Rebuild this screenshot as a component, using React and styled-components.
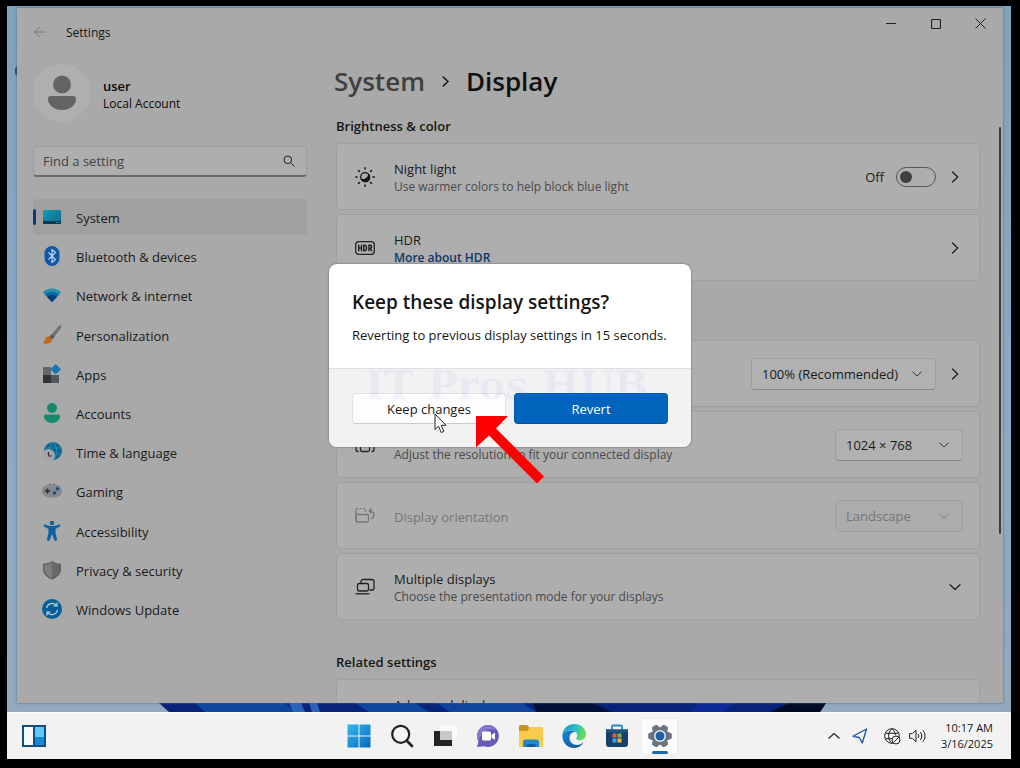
import React, { useState } from 'react';
import styled, { createGlobalStyle } from 'styled-components';

const GlobalStyle = createGlobalStyle`
  * {
    box-sizing: border-box;
  }
  body {
    margin: 0;
    background: #000;
    color: #161616;
    font-family: 'Open Sans', 'Noto Sans', sans-serif;
    font-size: 13px;
    line-height: 18px;
  }
  button, input, select {
    font: inherit;
    color: inherit;
    margin: 0;
  }
  svg {
    display: block;
    flex: none;
  }
  h1, h2, p, ul {
    margin: 0;
    padding: 0;
  }
`;

const Screen = styled.div`
  display: flex;
  flex-direction: column;
  height: 100vh;
  padding: 6px 9px 9px 7px;
`;

const Desktop = styled.div`
  position: relative;
  flex: 1;
  min-height: 0;
  display: flex;
  flex-direction: column;
  padding-top: 2px;
  background: linear-gradient(#7ea3be, #8ba8c8 60%, #93a9bd);
`;

const DesktopIcon = styled.span`
  position: absolute;
  left: 8px;
  top: 60px;
  width: 12px;
  height: 10px;
  border-radius: 4px;
  background: #2c4a60;
`;

const Window = styled.div`
  position: relative;
  flex: 1;
  min-height: 0;
  display: flex;
  flex-direction: column;
  margin: 0 8px 0 10px;
  overflow: hidden;
  background: #a9a9a9;
  box-shadow: 0 0 2px #4d6678;
`;

const TitleBar = styled.header`
  display: flex;
  align-items: center;
  height: 48px;
  flex: none;
  padding-left: 16px;
`;

const BackButton = styled.button`
  display: flex;
  padding: 0;
  border: 0;
  background: none;
  color: #7a7a7a;
`;

const AppName = styled.span`
  flex: 1;
  margin-left: 19px;
  padding-top: 2px;
  font-size: 12px;
`;

const CaptionButton = styled.button`
  align-self: flex-start;
  display: grid;
  place-items: center;
  width: 45px;
  height: 31px;
  padding: 0;
  border: 0;
  background: none;
`;

const WindowBody = styled.div`
  flex: 1;
  min-height: 0;
  display: flex;
`;

const Sidebar = styled.aside`
  width: 290px;
  flex: none;
  padding: 7px 0 0 16px;
`;

const Profile = styled.div`
  display: flex;
  align-items: center;
  gap: 12px;
  height: 59px;
`;

const ProfileText = styled.div`
  padding-top: 3px;
`;

const Avatar = styled.span`
  display: grid;
  place-items: center;
  width: 58px;
  height: 58px;
  border-radius: 50%;
  background: #afafaf;
`;

const UserName = styled.p`
  font-weight: 600;
  color: #0b0b0b;
  font-size: 13px;
`;

const UserKind = styled.p`
  font-size: 12px;
  line-height: 17px;
  color: #0b0b0b;
`;

const Search = styled.label`
  display: flex;
  align-items: center;
  height: 31px;
  margin-top: 24px;
  padding: 0 11px 0 9px;
  border: 1px solid #9e9e9e;
  border-bottom: 2px solid #6a6a6a;
  border-radius: 4px;
  background: #aeaeae;
`;

const SearchInput = styled.input`
  flex: 1;
  min-width: 0;
  padding: 0;
  border: 0;
  outline: 0;
  background: none;
  &::placeholder {
    color: #444;
    opacity: 1;
  }
`;

const NavList = styled.ul`
  display: flex;
  flex-direction: column;
  justify-content: space-between;
  height: 428px;
  margin-top: 22px;
  list-style: none;
`;

const NavLink = styled.a`
  display: flex;
  align-items: center;
  gap: 13px;
  height: 36px;
  border-radius: 4px;
  color: #1a1a1a;
  text-decoration: none;
  background: ${({ $active }) => ($active ? '#a0a0a0' : 'transparent')};
  &::before {
    content: '';
    width: 3px;
    height: 16px;
    margin-right: -7px;
    border-radius: 2px;
    background: ${({ $active }) => ($active ? '#0c3c73' : 'transparent')};
  }
`;

const NavLabel = styled.span`
  padding: 2px 0 0 1px;
`;

const Main = styled.main`
  flex: 1;
  min-width: 0;
  padding-left: 29px;
  display: flex;
  flex-direction: column;
`;

const Breadcrumb = styled.h1`
  display: flex;
  align-items: center;
  gap: 15px;
  height: 50px;
  margin-left: -2px;
  font-size: 26px;
  line-height: 36px;
  font-weight: 600;
  color: #0f0f0f;
`;

const Crumb = styled.a`
  color: #3f3f3f;
  text-decoration: none;
`;

const Scroller = styled.div`
  flex: 1;
  min-height: 0;
  display: flex;
  justify-content: space-between;
  margin-top: 10px;
`;

const Sections = styled.div`
  flex: 1;
  display: flex;
  flex-direction: column;
  gap: 32px;
`;

const ScrollThumb = styled.div`
  width: 2px;
  height: 407px;
  margin: 11px 2px 0 19px;
  border-radius: 1px;
  background: #3c3c3c;
`;

const Section = styled.section`
  display: flex;
  flex-direction: column;
  gap: 4px;
`;

const SectionTitle = styled.h2`
  margin-bottom: 3px;
  font-size: 13px;
  line-height: 20px;
  font-weight: 600;
`;

const Card = styled.div`
  display: flex;
  align-items: center;
  gap: 11px;
  height: 67px;
  padding: 0 16px 0 18px;
  border: 1px solid #a0a0a0;
  border-radius: 4px;
  background: #aeaeae;
  color: ${({ $disabled }) => ($disabled ? '#757575' : '#1a1a1a')};
`;

const CardText = styled.div`
  flex: 1;
  margin-left: 8px;
  padding-top: 2px;
`;

const Caption = styled.p`
  font-size: 12px;
  line-height: 17px;
  color: #4a4a4a;
`;

const MoreLink = styled.a`
  display: block;
  font-size: 12px;
  line-height: 17px;
  font-weight: 600;
  color: #0d3868;
  text-decoration: none;
`;

const ToggleLabel = styled.label`
  display: flex;
  align-items: center;
  gap: 12px;
`;

const Toggle = styled.input`
  appearance: none;
  display: flex;
  align-items: center;
  width: 40px;
  height: 20px;
  padding: 0 3px;
  border: 1px solid #555;
  border-radius: 10px;
  justify-content: ${({ checked }) => (checked ? 'flex-end' : 'flex-start')};
  &::before {
    content: '';
    width: 12px;
    height: 12px;
    border-radius: 50%;
    background: #404040;
  }
`;

const IconButton = styled.button`
  display: grid;
  place-items: center;
  width: 16px;
  height: 20px;
  padding: 0;
  border: 0;
  background: none;
`;

const SelectBox = styled.span`
  display: grid;
  align-items: center;
  width: ${({ $wide }) => ($wide ? '185px' : '128px')};
  > * {
    grid-area: 1 / 1;
  }
  > svg {
    justify-self: end;
    margin-right: 14px;
    pointer-events: none;
  }
`;

const Select = styled.select`
  appearance: none;
  width: 100%;
  height: 32px;
  padding: 0 10px;
  border: 1px solid #9f9f9f;
  border-bottom-color: ${({ disabled }) => (disabled ? '#9f9f9f' : '#888')};
  border-radius: 4px;
  background: ${({ disabled }) => (disabled ? '#acacac' : '#b1b1b1')};
  color: inherit;
  opacity: 1;
`;

const Overlay = styled.div`
  position: absolute;
  inset: 0;
  display: grid;
  place-items: center;
`;

const Dialog = styled.div`
  position: relative;
  width: 362px;
  border-radius: 8px;
  background: #fff;
  box-shadow: 0 0 2px #555;
`;

const DialogBody = styled.div`
  padding: 24px 23px 0;
  height: 104px;
`;

const DialogTitle = styled.h2`
  font-size: 19px;
  line-height: 28px;
  font-weight: 600;
`;

const DialogText = styled.p`
  margin-top: 10px;
`;

const DialogActions = styled.div`
  position: relative;
  display: grid;
  grid-template-columns: 1fr 1fr;
  gap: 8px;
  padding: 24px 23px 23px;
  border-top: 1px solid #dfdfdf;
  border-radius: 0 0 8px 8px;
  background: #f2f2f2;
`;

const DialogButton = styled.button`
  height: 31px;
  padding: 0;
  border: 1px solid ${({ $primary }) => ($primary ? '#005fb8' : '#e0e0e0')};
  border-bottom-color: ${({ $primary }) => ($primary ? '#0a4f93' : '#cacaca')};
  border-radius: 4px;
  background: ${({ $primary }) => ($primary ? '#0064bd' : '#fdfdfd')};
  color: ${({ $primary }) => ($primary ? '#fff' : '#1a1a1a')};
`;

const Watermark = styled.span`
  position: absolute;
  left: 36px;
  top: -7px;
  font: bold 40px/46px 'DejaVu Serif', serif;
  white-space: nowrap;
  color: rgba(90, 90, 240, 0.07);
  pointer-events: none;
`;

const Pointer = styled.svg`
  position: absolute;
  left: 105px;
  top: 149px;
`;

const RedArrow = styled.svg`
  position: absolute;
  left: 146px;
  top: 151px;
`;

const Taskbar = styled.footer`
  display: grid;
  grid-template-columns: 1fr auto 1fr;
  align-items: center;
  height: 47px;
  flex: none;
  padding: 0 14px;
  border-top: 1px solid #fbfbfb;
  background: #f2f2f2;
`;

const TaskGroup = styled.div`
  display: flex;
  gap: 6px;
`;

const TaskButton = styled.button`
  position: relative;
  display: grid;
  place-items: center;
  justify-self: start;
  width: ${({ $plain }) => ($plain ? '26px' : '37px')};
  height: 37px;
  padding: 0;
  border: 1px solid ${({ $active }) => ($active ? '#ebebeb' : 'transparent')};
  border-radius: 4px;
  background: ${({ $active }) => ($active ? '#fbfbfb' : 'none')};
  &::after {
    content: '';
    display: ${({ $active }) => ($active ? 'block' : 'none')};
    position: absolute;
    bottom: 0;
    width: 16px;
    height: 3px;
    border-radius: 2px;
    background: #1a6aa8;
  }
`;

const Tray = styled.div`
  display: flex;
  align-items: center;
  justify-content: flex-end;
  gap: 8px;
  padding-right: 4px;
`;

const Clock = styled.time`
  margin-left: 7px;
  font-size: 11px;
  line-height: 16px;
  text-align: right;
`;

const ChevronRight = ({ size = 12, width = 1.2 }) => (
  <svg width={size} height={size} viewBox="0 0 12 12" fill="none" stroke="currentColor" strokeWidth={width} strokeLinecap="round" strokeLinejoin="round">
    <path d="M3.5 1 8.7 6l-5.2 5" />
  </svg>
);

const ChevronDown = ({ size = 10, width = 1.2 }) => (
  <svg width={size} height={size} viewBox="0 0 12 12" fill="none" stroke="currentColor" strokeWidth={width} strokeLinecap="round" strokeLinejoin="round">
    <path d="M1 3.700 6 8.500l5-4.800" />
  </svg>
);

const Icon = ({ children, size = 20, ...rest }) => (
  <svg width={size} height={size} viewBox="0 0 20 20" fill="none" {...rest}>{children}</svg>
);

const navIcons = {
  system: (
    <Icon>
      <defs><linearGradient id="sys" x2="1" y2="1"><stop stopColor="#169fae" /><stop offset="1" stopColor="#0a6793" /></linearGradient></defs>
      <rect x="1" y="3" width="18" height="14" rx="1" fill="url(#sys)" />
      <path d="M1 14h18v2a1 1 0 0 1-1 1H2a1 1 0 0 1-1-1z" fill="#083a50" />
      <path d="M14 15.5h1M16.500 15.500h1" stroke="#4ba0b6" />
    </Icon>
  ),
  bluetooth: (
    <Icon>
      <rect x="2.500" y="0" width="15" height="20" rx="7.500" fill="#0e58a8" />
      <path d="m6.500 6.500 7 7L10 16.500v-13l3.500 3-7 7" stroke="#bcc9da" strokeWidth="1.300" strokeLinejoin="round" />
    </Icon>
  ),
  network: (
    <Icon>
      <path d="M10 3.500c3.600 0 6.900 1.400 9.400 3.800L10 17 .6 7.300A13.500 13.500 0 0 1 10 3.500z" fill="#2593ae" />
      <path d="M10 6.700c2.800 0 5.300 1 7.200 2.800L10 17 2.800 9.500C4.700 7.700 7.200 6.700 10 6.700z" fill="#086a9f" />
      <path d="M10 10c1.900 0 3.600.7 4.900 1.900L10 17l-4.900-5.100A7.200 7.200 0 0 1 10 10z" fill="#063b75" />
    </Icon>
  ),
  brush: (
    <Icon>
      <path d="M19.200.6c-.8-.7-1.800-.3-2.500.5L8 11.300l2.800 2.600 8-10.700c.7-1 .9-2 .4-2.600z" fill="#707478" />
      <path d="m9.500 9.600-2 2.300 2.700 2.700 2-2.600z" fill="#4f5357" />
      <path d="M7.600 11.400c-2-.4-3.900.8-4.400 2.900-.4 1.500-1.200 2.700-2.700 3.700 3.600 1.500 8 .9 9.200-1.900.8-1.800-.2-4.200-2.100-4.700z" fill="#bd6a16" />
    </Icon>
  ),
  apps: (
    <Icon>
      <path d="M1 3h8v8H1z" fill="#65686b" />
      <path d="M1 11h8v8H1z" fill="#303336" />
      <path d="M9 11h8v8H9z" fill="#53575b" />
      <rect x="10" y="1.500" width="7.500" height="7.500" rx="1" transform="rotate(45 13.700 5.200)" fill="#1777b0" />
    </Icon>
  ),
  accounts: (
    <Icon>
      <circle cx="10" cy="5" r="5" fill="#15896c" />
      <path d="M4 11.500h12c1.300 0 2.200.9 2 2.200-.5 3.900-4 6.300-8 6.300s-7.500-2.400-8-6.300c-.2-1.300.7-2.200 2-2.200z" fill="#15896c" />
    </Icon>
  ),
  time: (
    <Icon>
      <circle cx="11" cy="9" r="9" fill="#0d6895" />
      <path d="M11 0c-5 5-5 13 0 18m0-18c5 5 5 13 0 18M3 6h16M3 12h16" stroke="#2f8fac" strokeWidth=".8" />
      <circle cx="6.500" cy="13.500" r="6.500" fill="#a3a6a9" />
      <path d="M6.500 10v4h3.300" stroke="#2b2e31" strokeWidth="1.200" />
    </Icon>
  ),
  gaming: (
    <Icon>
      <path d="M7 3.500h1.500M11.500 3.500H13" stroke="#444" strokeWidth="1.500" />
      <rect y="3.500" width="20" height="13" rx="6.500" fill="#85888c" />
      <path d="M3 10h5M5.500 7.500v5" stroke="#292b2d" strokeWidth="1.400" />
      <circle cx="15.500" cy="7.800" r="1.700" fill="#124f88" />
      <circle cx="12.500" cy="12" r="1.700" fill="#124f88" />
    </Icon>
  ),
  accessibility: (
    <Icon fill="#0a62a2">
      <circle cx="10" cy="2" r="2.200" />
      <path d="M3 3.500c-1-.5-2 1-.8 1.900L6.500 8v4L5 18.300c-.3 1.700 2 2.200 2.600.7L10 13l2.400 6c.6 1.500 2.900 1 2.600-.7L13.500 12V8l4.300-2.600c1.200-.9.200-2.400-.8-1.900L12.500 5h-5z" />
    </Icon>
  ),
  shield: (
    <Icon>
      <path d="M10 1c2.500 2 5.600 2.700 9 2.700V9c0 5-3.500 8.500-9 10.500C4.500 17.500 1 14 1 9V3.700C4.400 3.700 7.500 3 10 1z" fill="#5b5d5f" />
      <path d="M10 2.300c2.300 1.700 5 2.300 7.800 2.500V9c0 4.300-2.900 7.300-7.800 9.200z" fill="#66686a" />
      <path d="M10 2.300C7.700 4 5 4.600 2.200 4.800V9c0 4.300 2.900 7.300 7.800 9.200z" fill="#7c7e81" />
    </Icon>
  ),
  update: (
    <Icon>
      <circle cx="10" cy="10" r="10" fill="#075f99" />
      <path d="M4.500 9a5.700 5.700 0 0 1 10-2.600M15.500 11a5.700 5.700 0 0 1-10 2.600" stroke="#b9cad6" strokeWidth="1.300" />
      <path d="M15 3.500v3.300h-3.500M5 16.500v-3.300h3.500" stroke="#b9cad6" strokeWidth="1.300" />
    </Icon>
  ),
};

const NightIcon = () => (
  <Icon>
    <circle cx="10" cy="10" r="4.300" stroke="#161616" strokeWidth="1.300" />
    <path d="M13.500 6.500A5 5 0 1 1 5.500 11.500C9 13 13 11 13.500 6.500z" fill="#161616" />
    <path d="M10 .8v1.200M10 18v1.200M.8 10H2M18 10h1.200M3.500 3.500l.9.900M15.600 15.600l.9.900M3.500 16.500l.9-.9M15.600 4.400l.9-.9" stroke="#161616" strokeWidth="1.500" strokeLinecap="round" />
  </Icon>
);

const HdrIcon = () => (
  <Icon>
    <rect x=".7" y="3.700" width="18.600" height="12.600" rx="3" stroke="#222" strokeWidth="1.300" />
    <path d="M3.700 6.800v6.500M6.500 6.800v6.500M3.700 10h2.800M8.700 7.300v5.500h.8c1.300 0 2-.9 2-2.700s-.7-2.800-2-2.800zM14 13.300V7.300h1.200c1.900 0 1.900 3 0 3H14m1.400 0 1.300 3" stroke="#222" strokeWidth="1.400" />
  </Icon>
);

const ScaleIcon = () => (
  <Icon stroke="#222" strokeWidth="1.200">
    <rect x="1" y="3" width="18" height="14" rx="2" />
    <rect x="4" y="9" width="7" height="5" rx="1" />
  </Icon>
);

const ResolutionIcon = () => (
  <Icon stroke="#222" strokeWidth="1.300" strokeLinecap="round">
    <path d="M4 3.500H3A2 2 0 0 0 1 5.500v9a2 2 0 0 0 2 2M16 3.500h1a2 2 0 0 1 2 2v9a2 2 0 0 1-2 2" />
    <rect x="5.500" y="7" width="9" height="9.500" rx="1.500" />
  </Icon>
);

const OrientationIcon = () => (
  <Icon stroke="currentColor" strokeWidth="1.300">
    <path d="M1 15V3.500" />
    <path d="M1 2.700h9.500v3" strokeDasharray="2 1.500" />
    <rect x="1" y="8.500" width="12.500" height="7.500" rx="1.500" />
    <path d="M14.500 5h1.500c4 1.500 4 6 0 8M16.500 2.500 14.200 5l2.500 2.300" />
  </Icon>
);

const MultipleIcon = () => (
  <Icon stroke="#222" strokeWidth="1.300">
    <path d="M6 6V4.500a2 2 0 0 1 2-2h9a2 2 0 0 1 2 2V11a2 2 0 0 1-2 2h-2.500" />
    <rect x="2.500" y="6.500" width="11" height="7.500" rx="1.700" />
    <path d="M.5 16.800h14" />
  </Icon>
);

const taskIcons = {
  start: (
    <svg width="24" height="24" viewBox="0 0 24 24">
      <defs><linearGradient id="win" x2="1" y2="1" gradientUnits="userSpaceOnUse" gradientTransform="scale(24)"><stop stopColor="#3ab8f0" /><stop offset="1" stopColor="#0069bf" /></linearGradient></defs>
      <path d="M.5.500h11v11H.500zM12.500.500h11v11h-11zM.500 12.500h11v11H.500zM12.500 12.500h11v11h-11z" fill="url(#win)" />
    </svg>
  ),
  search: (
    <svg width="24" height="24" viewBox="0 0 24 24" fill="none" stroke="#222">
      <circle cx="10.700" cy="10.300" r="8.500" strokeWidth="2.200" fill="#f6f6f6" />
      <path d="m17 17 5 5" strokeWidth="2.800" strokeLinecap="round" />
    </svg>
  ),
  tasks: (
    <svg width="24" height="24" viewBox="0 0 24 24">
      <path d="M1 7h18v15H1z" fill="#242424" />
      <path d="M7 1h17v15H7z" fill="#fafafa" />
      <path d="M7 7h12v9H7z" fill="#c8c8c8" />
    </svg>
  ),
  chat: (
    <svg width="24" height="24" viewBox="0 0 24 24">
      <path d="M12 1a11 11 0 1 1-4 21.300L1 23l1.500-5.500A11 11 0 0 1 12 1z" fill="#6759b5" />
      <path d="M12 1a11 11 0 0 0-9.800 16C7 5 14 4 21 6a11 11 0 0 0-9-5z" fill="#8578cf" />
      <rect x="6" y="7.500" width="9" height="9" rx="1.500" fill="#fff" />
      <path d="m15.500 11 3.500-2.500v7.500l-3.500-2.500z" fill="#fff" />
    </svg>
  ),
  files: (
    <svg width="26" height="24" viewBox="0 0 26 24">
      <path d="M1 2.500A1.500 1.500 0 0 1 2.500 1H9l3 3h12a1 1 0 0 1 1 1v4H1z" fill="#c8921c" />
      <path d="M1 7h8l3-4h12a1 1 0 0 1 1 1v19H2a1 1 0 0 1-1-1z" fill="#f9cb4c" />
      <path d="M5 23v-5a2.500 2.500 0 0 1 2.500-2.500h11A2.500 2.500 0 0 1 21 18v5z" fill="#1f8ac9" />
      <path d="M8.500 20h9v3h-9z" fill="#0f5f9e" />
    </svg>
  ),
  edge: (
    <svg width="24" height="24" viewBox="0 0 24 24">
      <defs>
        <linearGradient id="edgeTop" x2="1" y2=".3"><stop stopColor="#1d93d6" /><stop offset=".6" stopColor="#2bc0c0" /><stop offset="1" stopColor="#66dc5c" /></linearGradient>
        <linearGradient id="edgeSide" y2="1"><stop stopColor="#1b87d0" /><stop offset="1" stopColor="#0c4f9b" /></linearGradient>
      </defs>
      <path d="M.4 11C1 4.500 6 0 12.200 0 19 0 24 4.800 24 10.300c0 3.600-2.600 6-5.800 6-2.700 0-4-1.100-4-1.900 0-.6 1-1 1-3 0-2.800-2.500-4.900-6-4.900C5 6.500 1.400 8.300.4 11z" fill="url(#edgeTop)" />
      <path d="M.4 11c1-3 4.600-4.500 9-4.500 2 0 3.500.6 4.600 1.700-3.700-.6-6.500 2-6.500 5.800 0 4.600 4.500 8 9.500 6.700 2-.5 3.800-1.700 4.900-2.900C20 21.500 16.500 24 12 24 5 24 0 18 .4 11z" fill="url(#edgeSide)" />
    </svg>
  ),
  store: (
    <svg width="24" height="24" viewBox="0 0 24 24">
      <path d="M7 6V2.500a1 1 0 0 1 1-1h8a1 1 0 0 1 1 1V6" fill="none" stroke="#2589bd" strokeWidth="1.800" />
      <path d="M1 5.500h22V20a3 3 0 0 1-3 3H4a3 3 0 0 1-3-3z" fill="#163f6c" />
      <path d="M1 5.500h22v3H1z" fill="#1e5786" />
      <path d="M7.500 9.500h4v4h-4z" fill="#e5603c" /><path d="M12.500 9.500h4v4h-4z" fill="#86b740" />
      <path d="M7.500 14.500h4v4h-4z" fill="#39a5dc" /><path d="M12.500 14.500h4v4h-4z" fill="#efbd37" />
    </svg>
  ),
  settings: (
    <svg width="24" height="24" viewBox="0 0 24 24">
      <g fill="#69737e">
        <circle cx="12" cy="12" r="9" />
        {[0, 60, 120, 180, 240, 300].map(angle => (
          <path key={angle} d="M8 4 9.300.6Q12-.2 14.700.6L16 4z" transform={`rotate(${angle + 30} 12 12)`} />
        ))}
      </g>
      <circle cx="12" cy="12" r="6" fill="#e3eaf0" />
      <circle cx="12" cy="12" r="4.500" fill="#1d61a5" />
    </svg>
  ),
};

const navItems = [
  ['system', 'System'],
  ['bluetooth', 'Bluetooth & devices'],
  ['network', 'Network & internet'],
  ['brush', 'Personalization'],
  ['apps', 'Apps'],
  ['accounts', 'Accounts'],
  ['time', 'Time & language'],
  ['gaming', 'Gaming'],
  ['accessibility', 'Accessibility'],
  ['shield', 'Privacy & security'],
  ['update', 'Windows Update'],
];

const taskNames = {
  start: 'Start',
  search: 'Search',
  tasks: 'Task view',
  chat: 'Chat',
  files: 'File Explorer',
  edge: 'Edge',
  store: 'Store',
  settings: 'Settings',
};

function Dropdown({ label, value, wide, disabled }) {
  return (
    <SelectBox $wide={wide}>
      <Select aria-label={label} disabled={disabled} defaultValue={value}>
        <option>{value}</option>
      </Select>
      <ChevronDown width={1} />
    </SelectBox>
  );
}

function NavPane() {
  const [active, setActive] = useState('system');
  return (
    <Sidebar>
      <Profile>
        <Avatar>
          <svg width="28" height="36" viewBox="0 0 28 36" fill="#636363">
            <circle cx="14" cy="9.500" r="9" />
            <path d="M3 21h22c2 0 3 1.200 3 3 0 6-6 11-14 11S0 30 0 24c0-1.800 1-3 3-3z" />
          </svg>
        </Avatar>
        <ProfileText>
          <UserName>user</UserName>
          <UserKind>Local Account</UserKind>
        </ProfileText>
      </Profile>
      <Search>
        <SearchInput type="text" placeholder="Find a setting" aria-label="Find a setting" />
        <svg width="12" height="12" viewBox="0 0 12 12" fill="none" stroke="#222">
          <circle cx="4.800" cy="4.800" r="3.800" />
          <path d="m7.600 7.600 4 4" />
        </svg>
      </Search>
      <NavList>
        {navItems.map(([id, label]) => (
          <li key={id}>
            <NavLink href={`#${id}`} $active={active === id} onClick={() => setActive(id)}>
              {navIcons[id]}
              <NavLabel>{label}</NavLabel>
            </NavLink>
          </li>
        ))}
      </NavList>
    </Sidebar>
  );
}

function DisplayPage() {
  const [night, setNight] = useState(false);
  return (
    <Main>
      <Breadcrumb>
        <Crumb href="#system">System</Crumb>
        <ChevronRight size={11} width={1.6} />
        Display
      </Breadcrumb>
      <Scroller>
        <Sections>
          <Section>
            <SectionTitle>Brightness &amp; color</SectionTitle>
            <Card>
              <NightIcon />
              <CardText>
                <p>Night light</p>
                <Caption>Use warmer colors to help block blue light</Caption>
              </CardText>
              <ToggleLabel>
                {night ? 'On' : 'Off'}
                <Toggle type="checkbox" checked={night} onChange={() => setNight(!night)} />
              </ToggleLabel>
              <IconButton aria-label="Night light settings"><ChevronRight /></IconButton>
            </Card>
            <Card>
              <HdrIcon />
              <CardText>
                <p>HDR</p>
                <MoreLink href="#hdr">More about HDR</MoreLink>
              </CardText>
              <IconButton aria-label="HDR settings"><ChevronRight /></IconButton>
            </Card>
          </Section>
          <Section>
            <SectionTitle>Scale &amp; layout</SectionTitle>
            <Card>
              <ScaleIcon />
              <CardText>
                <p>Scale</p>
              </CardText>
              <Dropdown label="Scale" value="100% (Recommended)" wide />
              <IconButton aria-label="Custom scaling"><ChevronRight /></IconButton>
            </Card>
            <Card>
              <ResolutionIcon />
              <CardText>
                <p>Display resolution</p>
                <Caption>Adjust the resolution to fit your connected display</Caption>
              </CardText>
              <Dropdown label="Display resolution" value="1024 × 768" />
            </Card>
            <Card $disabled>
              <OrientationIcon />
              <CardText>Display orientation</CardText>
              <Dropdown label="Display orientation" value="Landscape" disabled />
            </Card>
            <Card>
              <MultipleIcon />
              <CardText>
                <p>Multiple displays</p>
                <Caption>Choose the presentation mode for your displays</Caption>
              </CardText>
              <IconButton aria-label="Expand multiple displays"><ChevronDown size={12} /></IconButton>
            </Card>
          </Section>
          <Section>
            <SectionTitle>Related settings</SectionTitle>
            <Card>
              <Icon />
              <CardText>
                <p>Advanced display</p>
                <Caption>&nbsp;</Caption>
              </CardText>
            </Card>
          </Section>
        </Sections>
        <ScrollThumb />
      </Scroller>
    </Main>
  );
}

function KeepSettingsDialog() {
  return (
    <Overlay>
      <Dialog role="dialog" aria-labelledby="keep-title">
        <DialogBody>
          <DialogTitle id="keep-title">Keep these display settings?</DialogTitle>
          <DialogText>Reverting to previous display settings in 15 seconds.</DialogText>
        </DialogBody>
        <DialogActions>
          <DialogButton>Keep changes</DialogButton>
          <DialogButton $primary>Revert</DialogButton>
          <Watermark>IT Pros HUB</Watermark>
        </DialogActions>
        <Pointer width="13" height="21" viewBox="0 0 13 21">
          <path d="M1 1v15.500l3.500-3.300 2.700 6.300 2.600-1.100-2.700-6.100H12z" fill="#fff" stroke="#222" />
        </Pointer>
        <RedArrow width="70" height="70" viewBox="0 0 70 70">
          <path d="M1 1h32L21 13.500l48 48-7 7-48-48L1 32.500z" fill="#f00" />
        </RedArrow>
      </Dialog>
    </Overlay>
  );
}

function App() {
  return (
    <>
      <GlobalStyle />
      <Screen>
        <Desktop>
          <DesktopIcon />
          <Window>
            <TitleBar>
              <BackButton aria-label="Back">
                <svg width="14" height="12" viewBox="0 0 14 12" fill="none" stroke="currentColor">
                  <path d="M13 6H1.500M6.500 1l-5 5 5 5" />
                </svg>
              </BackButton>
              <AppName>Settings</AppName>
              <CaptionButton aria-label="Minimize">
                <svg width="10" height="10" stroke="#222"><path d="M0 4.500h10" /></svg>
              </CaptionButton>
              <CaptionButton aria-label="Maximize">
                <svg width="10" height="10" stroke="#222" fill="none"><rect x=".5" y=".5" width="9" height="9" rx="1" strokeWidth="1.200" /></svg>
              </CaptionButton>
              <CaptionButton aria-label="Close">
                <svg width="11" height="11" stroke="#222"><path d="m.5.500 10 10M10.500.500l-10 10" /></svg>
              </CaptionButton>
            </TitleBar>
            <WindowBody>
              <NavPane />
              <DisplayPage />
            </WindowBody>
            <KeepSettingsDialog />
          </Window>
          <svg width="100%" height="9" viewBox="0 0 1004 9" preserveAspectRatio="none">
            <path d="M152 0h667l-6 9H162z" fill="#07247a" />
            <path d="M188 0h90l10 9H198zM348 0h60l14 9h-60zM430 0h85l14 9h-86z" fill="#0f449f" />
            <path d="M282 0h12l4 9h-12zM302 0h8l3 9h-8z" fill="#2a64b8" />
            <path d="M525 0h60l20 9h-75z" fill="#04103a" />
            <path d="M690 0h36l-8 9h-34z" fill="#0b2a98" />
            <path d="M782 0h37l-6 9h-50z" fill="#020b25" />
          </svg>
        </Desktop>
        <Taskbar>
          <TaskButton aria-label="Widgets" $plain>
            <svg width="24" height="22" viewBox="0 0 24 22">
              <path d="M0 0h24v22H0z" fill="#124e80" />
              <path d="M2 2h9v18H2z" fill="#f6fafd" />
              <path d="M13 2h9v10h-9z" fill="#5ccbf8" />
              <path d="M13 12h9v8h-9z" fill="#1a86d8" />
            </svg>
          </TaskButton>
          <TaskGroup>
            {Object.keys(taskIcons).map(id => (
              <TaskButton key={id} aria-label={taskNames[id]} $active={id === 'settings'}>
                {taskIcons[id]}
              </TaskButton>
            ))}
          </TaskGroup>
          <Tray>
            <svg width="12" height="12" viewBox="0 0 12 12" fill="none" stroke="#222" strokeWidth="1.200"><path d="m.5 8.500 5.500-5 5.500 5" /></svg>
            <svg width="28" height="16" viewBox="2 0 28 16" fill="none" stroke="#1c5596" strokeWidth="1.300" strokeLinejoin="round"><path d="M20.500 1 7 8.300l6.300 1.200 3 5.500z" /></svg>
            <svg width="17" height="17" viewBox="0 0 17 17" fill="none" stroke="#222">
              <circle cx="8" cy="8" r="7.300" />
              <path d="M8 .7C3.500 4 3.500 12 8 15.300M8 .7c2 1.500 3.200 4 3.300 6.500M1.500 5.300h13M1.500 10.700h6.300" />
              <circle cx="12" cy="12" r="4" fill="#f2f2f2" />
              <path d="m9.300 14.700 5.400-5.400" />
            </svg>
            <svg width="17" height="14" viewBox="0 0 17 14" fill="none" stroke="#222">
              <path d="M.6 4.700h2.700L7 1.200v11.600L3.300 9.300H.6zM9 4.800c1 1.300 1 3.100 0 4.400M11.300 3c2 2.300 2 5.700 0 8M13.700 1.200c3 3.300 3 8.300 0 11.600" />
            </svg>
            <Clock>
              10:17 AM
              <br />
              3/16/2025
            </Clock>
          </Tray>
        </Taskbar>
      </Screen>
    </>
  );
}

export default App;
